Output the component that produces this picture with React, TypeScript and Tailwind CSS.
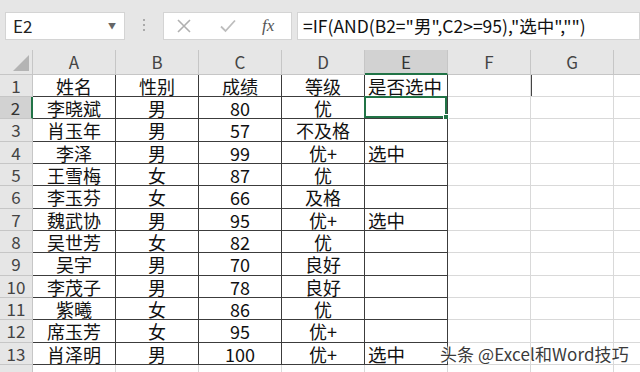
import React from "react"

const data: string[][] = [
  ["姓名", "性别", "成绩", "等级", "是否选中"],
  ["李晓斌", "男", "80", "优", ""],
  ["肖玉年", "男", "57", "不及格", ""],
  ["李泽", "男", "99", "优+", "选中"],
  ["王雪梅", "女", "87", "优", ""],
  ["李玉芬", "女", "66", "及格", ""],
  ["魏武协", "男", "95", "优+", "选中"],
  ["吴世芳", "女", "82", "优", ""],
  ["吴宇", "男", "70", "良好", ""],
  ["李茂子", "男", "78", "良好", ""],
  ["紫曦", "女", "86", "优", ""],
  ["席玉芳", "女", "95", "优+", ""],
  ["肖泽明", "男", "100", "优+", "选中"],
]

const cols = ["A", "B", "C", "D", "E", "F", "G"]
const font = { fontFamily: '"Noto Sans CJK SC", "Noto Sans", sans-serif' }

function Toolbar() {
  return (
    <div className="flex h-[50px] items-start bg-[#e6e6e6] pt-[12px]">
      <div className="ml-[5px] flex h-[28px] w-[120px] items-center justify-between border border-[#d4d4d4] bg-white pl-[7px] pr-[8px]">
        <span className="text-[17px] leading-[20px] text-[#222]">E2</span>
        <span className="text-[8px] text-[#666]">▼</span>
      </div>
      <div className="flex w-[38px] flex-col items-center justify-center gap-[3px] pt-[7px]">
        <span className="h-[2px] w-[2px] bg-[#aaa]" />
        <span className="h-[2px] w-[2px] bg-[#aaa]" />
        <span className="h-[2px] w-[2px] bg-[#aaa]" />
      </div>
      <div className="flex h-[28px] w-[129px] items-center border border-[#d4d4d4] bg-white">
        <svg width="14" height="14" viewBox="0 0 14 14" className="ml-[13px]">
          <path d="M1 1L13 13M13 1L1 13" stroke="#b0b0b0" strokeWidth="1.6" />
        </svg>
        <svg width="16" height="14" viewBox="0 0 16 14" className="ml-[29px]">
          <path d="M1 7.5L5.5 12L15 1.5" stroke="#bdbdbd" strokeWidth="1.8" fill="none" />
        </svg>
        <span
          className="ml-[26px] text-[17px] italic leading-[20px] text-[#555]"
          style={{ fontFamily: '"Liberation Serif", serif' }}
        >
          fx
        </span>
      </div>
      <div className="ml-[5px] flex h-[28px] flex-1 items-center border border-[#d4d4d4] bg-white pl-[5px]">
        <span className="text-[17.5px] leading-[22px] text-[#111]">=IF(AND(B2="男",C2&gt;=95),"选中","")</span>
      </div>
    </div>
  )
}

function HeaderRow() {
  return (
    <div className="flex h-[25px] bg-[#e6e6e6]">
      <div className="relative w-[33px] border-r border-b border-[#c6c6c6]">
        <svg width="16" height="16" viewBox="0 0 16 16" className="absolute bottom-[3px] right-[3px]">
          <path d="M16 0L16 16L0 16Z" fill="#b4b4b4" />
        </svg>
      </div>
      {cols.map((c) => (
        <div
          key={c}
          className={
            c === "E"
              ? "flex w-[83px] items-center justify-center border-r border-b-2 border-r-[#c6c6c6] border-b-[#217346] bg-[#d2d2d2] text-[#333]"
              : "flex w-[83px] items-center justify-center border-r border-b border-[#c6c6c6] text-[#444]"
          }
        >
          <span className="text-[17px] leading-[18px]">{c}</span>
        </div>
      ))}
      <div className="flex-1 border-b border-[#c6c6c6]" />
    </div>
  )
}

function SheetRow({ n, cells }: { n: number; cells: string[] }) {
  const isSel = n === 2
  const tall = n % 3 === 0
  return (
    <div className={tall ? "flex h-[23px]" : "flex h-[22px]"}>
      <div
        className={
          isSel
            ? "flex w-[33px] items-center justify-center border-r-2 border-b border-r-[#217346] border-b-[#c6c6c6] bg-[#d2d2d2] text-[#333]"
            : "flex w-[33px] items-center justify-center border-r border-b border-[#c6c6c6] bg-[#e6e6e6] text-[#444]"
        }
      >
        <span className="text-[17px] leading-[18px]">{n}</span>
      </div>
      {cells.map((v, i) => (
        <div
          key={i}
          className={
            i === 4
              ? "relative flex w-[83px] items-center justify-start border-r border-b border-[#3c3c3c] pl-[3px] text-[#111]"
              : "flex w-[83px] items-center justify-center border-r border-b border-[#3c3c3c] text-[#111]"
          }
        >
          {v && (
            <span className={i === 4 ? "text-[18.5px] leading-[18px]" : "text-[18px] leading-[18px]"}>{v}</span>
          )}
          {i === 4 && isSel && (
            <div className="absolute left-[-1px] top-[-1px] h-[calc(100%+1px)] w-[calc(100%+1px)] border-2 border-[#217346]">
              <div className="absolute bottom-[-4px] right-[-4px] h-[6px] w-[6px] border border-white bg-[#217346]" />
            </div>
          )}
        </div>
      ))}
      <div className="w-[83px] border-r border-b border-[#d9d9d9]" />
      <div
        className={
          n === 1
            ? "w-[83px] border-r border-b border-[#d9d9d9] shadow-[inset_1px_0_0_#444]"
            : "w-[83px] border-r border-b border-[#d9d9d9]"
        }
      />
      <div className="flex-1 border-b border-[#d9d9d9]" />
    </div>
  )
}

export default function App() {
  return (
    <div className="relative h-[372px] w-[640px] overflow-hidden bg-white" style={font}>
      <Toolbar />
      <HeaderRow />
      {data.map((r, i) => (
        <SheetRow key={i} n={i + 1} cells={r} />
      ))}
      <div className="flex h-[22px]">
        <div className="w-[33px] border-r border-[#c6c6c6] bg-[#e6e6e6]" />
        {cols.map((c) => (
          <div key={c} className="w-[83px] border-r border-[#d9d9d9]" />
        ))}
      </div>
      <div
        className="absolute left-[440px] top-[345px] text-[17px] leading-[18px] tracking-[0.1px] text-[#3a3a3a]"
        style={{ textShadow: "0 0 2px #fff, 0 0 2px #fff, 0 0 3px #fff" }}
      >
        头条 @Excel和Word技巧
      </div>
    </div>
  )
}
